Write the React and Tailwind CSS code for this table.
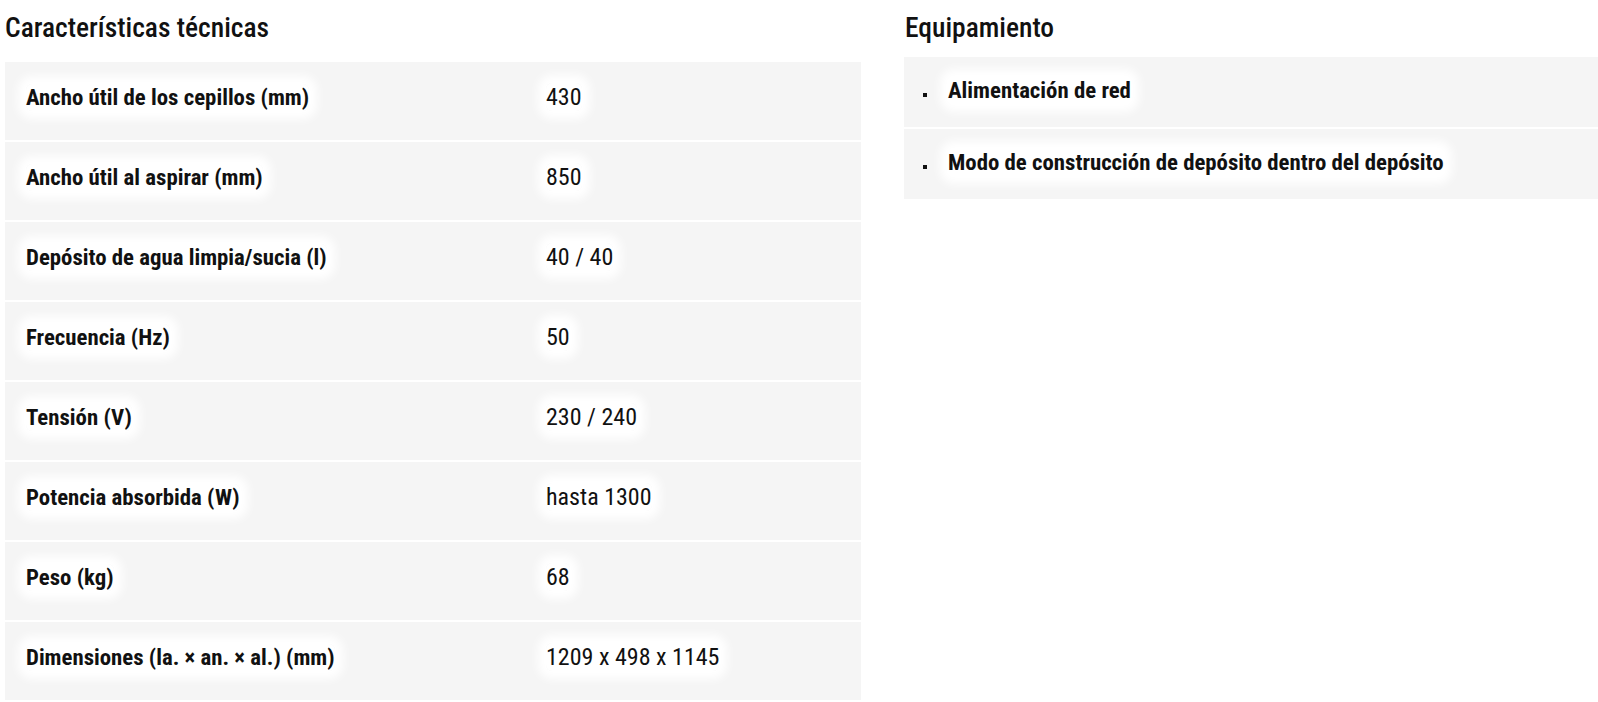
const specs = [
  { label: 'Ancho útil de los cepillos (mm)', value: '430' },
  { label: 'Ancho útil al aspirar (mm)', value: '850' },
  { label: 'Depósito de agua limpia/sucia (l)', value: '40 / 40' },
  { label: 'Frecuencia (Hz)', value: '50' },
  { label: 'Tensión (V)', value: '230 / 240' },
  { label: 'Potencia absorbida (W)', value: 'hasta 1300' },
  { label: 'Peso (kg)', value: '68' },
  { label: 'Dimensiones (la. × an. × al.) (mm)', value: '1209 x 498 x 1145' },
];

const equipment = ['Alimentación de red', 'Modo de construcción de depósito dentro del depósito'];

function Glow({ children, className = '' }) {
  return (
    <span className={`bg-white rounded-md shadow-[0_0_10px_8px_#fff] whitespace-nowrap ${className}`}>
      {children}
    </span>
  );
}

export default function App() {
  return (
    <div
      className="min-h-screen bg-white text-[#111] overflow-hidden"
      style={{ fontFamily: 'Roboto, "Liberation Sans", sans-serif', fontStretch: 'condensed' }}
    >
      <div className="flex gap-[43px] pl-[5px]">
        <section className="w-[856px] shrink-0">
          <h2 className="mt-[12px] mb-[19px] text-[27.5px] leading-[31px] font-medium">Características técnicas</h2>
          <div className="flex flex-col gap-[2px]">
            {specs.map((row) => (
              <div key={row.label} className="h-[78px] bg-[#f5f5f5] flex items-center pb-[7px] leading-[27px]">
                <div className="w-[520px] pl-[21px] text-[22.8px]">
                  <Glow className="font-bold">{row.label}</Glow>
                </div>
                <div className="pl-[21px] text-[24px]">
                  <Glow>{row.value}</Glow>
                </div>
              </div>
            ))}
          </div>
        </section>

        <section className="flex-1">
          <h2 className="mt-[12px] mb-[14px] pl-[1px] text-[27.5px] leading-[31px] font-medium">Equipamiento</h2>
          <ul className="flex flex-col gap-[2px]">
            {equipment.map((item) => (
              <li key={item} className="h-[70px] bg-[#f5f5f5] flex items-center pb-[3px] pl-[19px] text-[22.8px] leading-[27px]">
                <span className="w-[4px] h-[4px] bg-[#111] mt-[8px] mr-[21px] shrink-0"></span>
                <Glow className="font-bold">{item}</Glow>
              </li>
            ))}
          </ul>
        </section>
      </div>
    </div>
  );
}
